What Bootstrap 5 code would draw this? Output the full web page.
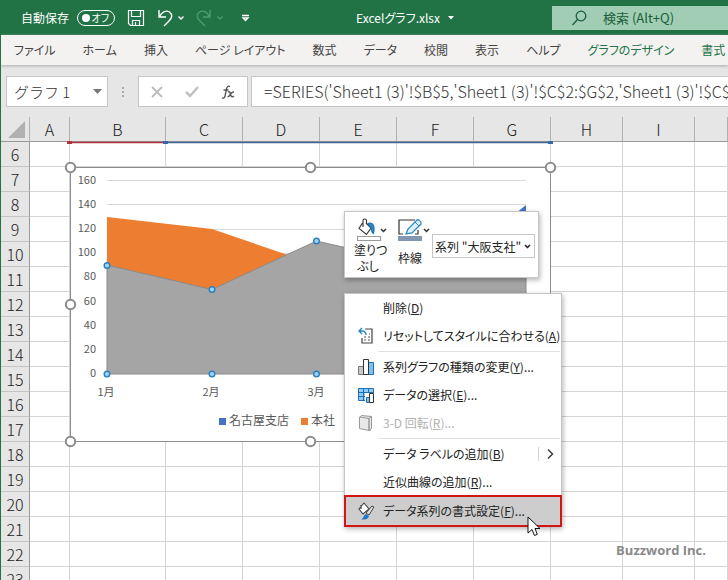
<!DOCTYPE html>
<html lang="ja">
<head>
<meta charset="utf-8">
<meta name="viewport" content="width=device-width, initial-scale=1">
<title>Excelグラフ.xlsx</title>
<link href="https://cdn.jsdelivr.net/npm/bootstrap@5.3.0/dist/css/bootstrap.min.css" rel="stylesheet">
<style>
body{font-family:"Noto Sans CJK JP","Noto Sans",sans-serif;font-size:12px;line-height:20px;font-feature-settings:"palt";color:#444;background:#e6e6e6;border-left:1px solid #217346}
button{font:inherit;font-feature-settings:inherit;color:inherit;background:none;border:0;padding:0}
.titlebar{background:#217346;color:#fff;height:35px}
.titlebar svg,.menu-icon{flex:none}
.switch{width:38px;height:16px;border:1px solid #fff;border-radius:8px;font-size:10px;line-height:14px;padding:0 5px 0 4px}
.switch .knob{width:8px;height:8px;border-radius:4px;background:#fff}
.search{background:#a0cdb3;color:#1b5e38;height:24px;width:176px;font-size:13px;gap:14px}
.search input{background:none;border:0;outline:0;color:inherit;font:inherit;min-width:0}
.search input::placeholder{color:#1b5e38;opacity:1}
.ribbon{background:#f3f2f1;height:30px;gap:27px;padding-left:13px;box-shadow:0 1px 3px #aaa}
.ribbon a{color:#444;text-decoration:none;white-space:nowrap}
.ribbon a.chart-tab{color:#217346}
.formulabar{padding:11px 0 10px 5px}
.fbox{height:31px;border:1px solid #c6c6c6;background-color:#fff;border-radius:0;color:#333}
.namebox{width:102px;font-size:15px;line-height:20px;padding:0 20px 0 7px;appearance:none;font-weight:300;font-feature-settings:normal;background-repeat:no-repeat;background-position:right 5px center;background-image:url("data:image/svg+xml,%3Csvg xmlns='http://www.w3.org/2000/svg' width='9' height='5'%3E%3Cpath d='M0 0h9L4.500 5z' fill='%23777'/%3E%3C/svg%3E")}
.dots{margin:0 14px}
.fxbox{width:110px}
.formula{min-width:0;margin-left:3px;padding:0 0 2px 12px;border-right:0;font:300 16px "Noto Sans CJK JP",sans-serif;outline:0}
.sheet{min-height:0}
.cells{table-layout:fixed;width:100%;border-collapse:separate;border-spacing:0}
.cells th{font:300 16px/22px "Noto Sans CJK JP",sans-serif;color:#222;text-align:center;padding:0;background:#e6e6e6}
.cells thead th{height:25px;border-right:1px solid #b1b1b1;border-bottom:1px solid #999}
.cells tbody th{height:25px;line-height:24px;border-right:1px solid #999;border-bottom:1px solid #c4c4c4}
.cells td{background:#fff;border-right:1px solid #d4d4d4;border-bottom:1px solid #d4d4d4;padding:0}
.w-head{width:29px}.w-a{width:40px}.w-b{width:96px}.w-c{width:77px}.w-h{width:72px}
.chart{position:absolute;left:59px;top:24px}
.chart text{font-family:"Noto Sans CJK JP",sans-serif;font-size:12px;fill:#595959}
.chart .scale text{font-size:11px}
.popup{position:absolute;background:#fff;border:1px solid #c6c6c6;box-shadow:1px 2px 5px rgba(0,0,0,.3);color:#222}
.minibar{left:343px;top:94px;width:195px;height:67px;padding:6px 3px 0 9px}
.minibar button{line-height:16px}
.minibar .caption{width:28px}
.series{width:103px;height:24px;border:1px solid #c6c6c6;font:12px "Noto Sans CJK JP",sans-serif;font-feature-settings:normal;color:#222;padding:0 12px 0 2px;appearance:none;background:#fff url("data:image/svg+xml,%3Csvg xmlns='http://www.w3.org/2000/svg' width='7' height='5'%3E%3Cpath d='M1 1l2.500 2.500L6 1' fill='none' stroke='%23222' stroke-width='1.500'/%3E%3C/svg%3E") no-repeat right 3px center}
.context{left:343px;top:176px;width:218px}
.context button{display:flex;align-items:center;height:28px;width:100%;text-align:left;padding-left:12px;gap:8px;white-space:nowrap}
.context button:disabled{color:#b1b1b1}
.context hr{margin:1px 1px 1px 33px;border:0;border-top:1px solid #e1e1e1;opacity:1}
.context .picked{background:#cdcdcd;outline:2px solid #d31515;outline-offset:-1px;height:30px}
.menu-icon{width:18px;height:18px}
.more{border-left:1px solid #d4d4d4;margin-right:7px;padding-left:7px;height:14px;display:flex;align-items:center}
.pointer{position:absolute;left:526px;top:399px}
.credit{position:absolute;right:22px;bottom:20px;font:700 13px/20px "Open Sans",sans-serif;color:#8a8a8a}
</style>
</head>
<body class="vh-100 d-flex flex-column overflow-hidden">
<header class="titlebar d-flex align-items-center flex-shrink-0">
  <div class="d-flex align-items-center flex-fill ps-3">
    <span class="ms-1 me-2 text-nowrap">自動保存</span>
    <button class="switch d-flex align-items-center justify-content-between" role="switch" aria-checked="false" aria-label="自動保存"><span class="knob"></span>オフ</button>
    <button class="ms-2 d-flex px-1" aria-label="保存"><svg width="18" height="18" fill="none" stroke="#fff" stroke-width="1.200"><path d="M1.500 1.500h15v15h-13l-2-2zM4.500 1.500v6h9v-6M5.500 16.500v-5h7v5M8.500 16v-3"/></svg></button>
    <button class="ms-2 d-flex" aria-label="元に戻す"><svg width="30" height="18" fill="none" stroke="#fff" stroke-width="1.400"><path d="M2 1v7h7M2.500 7.500C5 3 9 .8 12.500 3c3.500 2.500 2.500 6-.5 9l-5 5M21.500 7.500l2.500 2.500 2.500-2.500"/></svg></button>
    <button class="ms-2 d-flex" aria-label="やり直し" disabled><svg width="30" height="18" fill="none" stroke="#4f9b70" stroke-width="1.400"><path d="M15 1v7H8M14.500 7.500C12 3 8 .8 4.500 3 1 5.500 2 9 5 12l5 5M22.500 7.500l2.500 2.500 2.500-2.500"/></svg></button>
    <button class="ms-3 d-flex" aria-label="カスタマイズ"><svg width="9" height="8" fill="none" stroke="#fff" stroke-width="1.300"><path d="M1 1.500h7M2 4h5L4.500 6.500z"/></svg></button>
  </div>
  <button class="d-flex align-items-center gap-2 text-nowrap ms-2">Excelグラフ.xlsx <svg width="6" height="4"><path d="M0 0h6L3 3.500z" fill="#fff"/></svg></button>
  <div class="d-flex justify-content-end flex-fill">
    <label class="search d-flex align-items-center ps-3"><svg class="ms-1" width="15" height="16" fill="none" stroke="#1b5e38" stroke-width="1.300"><circle cx="9" cy="6" r="4.800"/><path d="M5.500 9.500L.5 15"/></svg><input type="search" placeholder="検索 (Alt+Q)" aria-label="検索"></label>
  </div>
</header>
<nav class="ribbon d-flex align-items-center flex-shrink-0 overflow-hidden">
  <a href="#">ファイル</a><a href="#">ホーム</a><a href="#">挿入</a><a href="#">ページ レイアウト</a><a href="#">数式</a><a href="#">データ</a><a href="#">校閲</a><a href="#">表示</a><a href="#">ヘルプ</a><a href="#" class="chart-tab">グラフのデザイン</a><a href="#" class="chart-tab">書式</a>
</nav>
<div class="formulabar d-flex align-items-center flex-shrink-0">
  <select class="fbox namebox" aria-label="名前ボックス"><option>グラフ 1</option></select>
  <svg class="dots flex-shrink-0" width="2" height="12" fill="#aaa"><path d="M0 1h2v2H0zM0 5h2v2H0zM0 9h2v2H0z"/></svg>
  <div class="fbox fxbox d-flex align-items-center justify-content-between px-2 flex-shrink-0">
    <button class="d-flex ms-1" aria-label="キャンセル"><svg width="12" height="12" stroke="#bcbcbc" stroke-width="1.800"><path d="M1 1l10 10M11 1L1 11"/></svg></button>
    <button class="d-flex" aria-label="入力"><svg width="14" height="12" fill="none" stroke="#c0c0c0" stroke-width="2.500"><path d="M1 6l4 4L13 1"/></svg></button>
    <button class="d-flex me-1" aria-label="関数の挿入"><svg width="14" height="14" fill="none" stroke="#555" stroke-width="1.400"><path d="M9 1.500C7 .5 6 1.500 5.500 4L4 11c-.5 2-1.500 2.500-3 1.800M2.500 5h5M7 7c2-.8 2 .5 2.500 2.500S11 12.500 13 11M13 7c-2-.5-3 1.500-4 3s-1.500 2-2.500 1.500"/></svg></button>
  </div>
  <input class="fbox formula flex-fill" aria-label="数式バー" value="=SERIES('Sheet1 (3)'!$B$5,'Sheet1 (3)'!$C$2:$G$2,'Sheet1 (3)'!$C$5:$G$5,3)">
</div>
<main class="sheet position-relative flex-fill overflow-hidden">
  <table class="cells">
    <colgroup><col class="w-head"><col class="w-a"><col class="w-b"><col class="w-c"><col class="w-c"><col class="w-c"><col class="w-c"><col class="w-c"><col class="w-h"><col class="w-h"><col></colgroup>
    <thead><tr><th><svg class="d-block ms-auto me-1" width="17" height="17" aria-label="すべて選択"><path d="M17 0v17H0z" fill="#b1b1b1"/></svg></th><th>A</th><th>B</th><th>C</th><th>D</th><th>E</th><th>F</th><th>G</th><th>H</th><th>I</th><th></th></tr></thead>
    <tbody id="rows"></tbody>
  </table>
  <svg class="chart" width="500" height="311" viewBox="60 141 500 311" role="img" aria-label="面グラフ">
    <path d="M72 142.500h91" stroke="#b0343c" stroke-width="1.500"/><path d="M168 142.500h380" stroke="#3f6797" stroke-width="1.500"/>
    <path d="M67 141h5v3h-5z" fill="#b0343c"/><path d="M163 141h5v3h-5zM548 141h5v3h-5z" fill="#3a66ae"/>
    <path d="M70.500 167.500h480v274h-480z" fill="#fff" stroke="#8c8c8c"/>
    <path d="M107 180.500h419M107 204.500h419M107 229.500h419M107 253.500h419" stroke="#d9d9d9"/>
    <path d="M421 290L526 205v169H421z" fill="#4472c4"/>
    <path d="M107 217l105 12 105 36v109H107z" fill="#ed7d31"/>
    <path d="M107 265l105 24.500L316.500 241l105 24L526 253v121H107z" fill="#a5a5a5" stroke="#8b8b8b"/>
    <g class="scale" text-anchor="end"><text x="96" y="184">160</text><text x="96" y="208">140</text><text x="96" y="232">120</text><text x="96" y="256">100</text><text x="96" y="280">80</text><text x="96" y="305">60</text><text x="96" y="329">40</text><text x="96" y="353">20</text><text x="96" y="377">0</text></g>
    <g class="scale" text-anchor="middle"><text x="106" y="396">1月</text><text x="211" y="396">2月</text><text x="316" y="396">3月</text></g>
    <path d="M219 418h7v7h-7z" fill="#4472c4"/><path d="M301 418h7v7h-7z" fill="#ed7d31"/>
    <text x="229" y="425">名古屋支店</text><text x="311" y="425">本社</text>
    <g fill="#9bd5fa" stroke="#2e7fc0" stroke-width="1.400"><circle cx="107" cy="265.500" r="2.800"/><circle cx="212" cy="289.500" r="2.800"/><circle cx="316.500" cy="241" r="2.800"/><circle cx="107" cy="374" r="2.800"/><circle cx="212" cy="374" r="2.800"/><circle cx="316.500" cy="374" r="2.800"/></g>
    <g fill="#fff" stroke="#8c8c8c" stroke-width="2"><circle cx="70.500" cy="167.500" r="4.700"/><circle cx="310.500" cy="167.500" r="4.700"/><circle cx="550.500" cy="167.500" r="4.700"/><circle cx="70.500" cy="304.500" r="4.700"/><circle cx="70.500" cy="441.500" r="4.700"/><circle cx="310.500" cy="441.500" r="4.700"/></g>
  </svg>
  <div class="popup minibar d-flex align-items-start" role="toolbar">
    <button><svg class="d-block" width="34" height="24" fill="none" stroke="#333" stroke-width="1.100"><path d="M9 9V2.500c0-2 3.500-2 3.500 0V5M8.500 5L5 10.500l7.500 6L17 10l-5-5"/><path d="M14 5.500c4-1.500 7.500 1 5.500 10-2.500-.5-1.500-4.500-3-6z" fill="#2b88c9" stroke="#1b6fb0"/><path d="M27 11l2.500 2.500L32 11" stroke-width="1.500"/><path d="M3.500 18.500h23v4h-23z" fill="#fff" stroke="#999"/></svg><span class="caption d-block text-center text-nowrap">塗りつ<br>ぶし</span></button>
    <button class="ms-2"><svg class="d-block mb-2" width="34" height="24" fill="none"><path d="M19 2H3v14h4M19 16h3v-4" stroke="#333" stroke-width="1.200"/><path d="M10 16l2-5 9-9c1-1 5 2 4 4l-9 9z" fill="#dff1fc" stroke="#2b88c9" stroke-width="1.300"/><path d="M19 4l4 4" stroke="#2b88c9"/><path d="M28 11l2.500 2.500L33 11" stroke="#333" stroke-width="1.500"/><path d="M2 18h24v5H2z" fill="#8497b0"/></svg><span class="caption d-block text-center">枠線</span></button>
    <select class="series ms-auto mt-3" aria-label="グラフ要素"><option>系列 "大阪支社"</option></select>
  </div>
  <div class="popup context" role="menu">
    <button role="menuitem"><span class="menu-icon"></span><span>削除(<u>D</u>)</span></button>
    <button role="menuitem"><svg class="menu-icon" fill="none"><path d="M8 2h7v14H5v-5" stroke="#444" stroke-width="1.200"/><path d="M5 1L2 4l3 3M2 4h3c3 0 4 1 4 4" stroke="#2b88c9" stroke-width="1.400"/><path d="M7 10h2M11 10h2M7 13h2M11 13h2M12 7h1" stroke="#555"/></svg><span>リセットしてスタイルに合わせる(<u>A</u>)</span></button>
    <hr>
    <button role="menuitem"><svg class="menu-icon"><path d="M1.500 8.500h5v8h-5z" fill="#c8c8c8" stroke="#777"/><path d="M11.500 4.500h5v12h-5z" fill="#7cc0f2" stroke="#1e6fb3"/><path d="M6.500 1.500h5v15h-5z" fill="#fff" stroke="#333"/></svg><span>系列グラフの種類の変更(<u>Y</u>)...</span></button>
    <button role="menuitem"><svg class="menu-icon"><path d="M1.500 2.500h15v12h-15z" fill="#8fcbf5" stroke="#1e6fb3"/><path d="M1 6.500h15M1 10.500h8M6.500 2v12M11.500 2v7" stroke="#1e6fb3"/><path d="M8 7h9v11H8z" fill="#fff"/><path d="M9.500 11.500h3v5h-3z" fill="#7cc0f2" stroke="#1e6fb3"/><path d="M12.500 7.500h4v9h-4z" fill="#fff" stroke="#333"/></svg><span>データの選択(<u>E</u>)...</span></button>
    <button role="menuitem" disabled><svg class="menu-icon" fill="#e8e8e8" stroke="#999"><path d="M2.500 3.500l2-2 10 1v11l-1.500 3z"/><path d="M2.500 3v11.500l9.500 2V4.500zM12 4.500l2.500-2v12l-2.500 2z"/></svg><span>3-D 回転(<u>R</u>)...</span></button>
    <hr>
    <button role="menuitem"><span class="menu-icon"></span><span>データ ラベルの追加(<u>B</u>)</span><span class="more ms-auto"><svg width="8" height="12" fill="none" stroke="#333" stroke-width="1.400"><path d="M2 1.500L6.500 6 2 10.500"/></svg></span></button>
    <button role="menuitem"><span class="menu-icon"></span><span>近似曲線の追加(<u>R</u>)...</span></button>
    <button role="menuitem" class="picked"><svg class="menu-icon" fill="none"><path d="M4 3v4M7 1l5 6-6 5-4-5z" fill="#fff" stroke="#444" stroke-width="1.100"/><path d="M9 11l6-7 2 1-5 8z" fill="#ddd" stroke="#444"/><path d="M4 17c3 0 2-4 5-5l3 2c-1 4-5 4-8 3z" fill="#1e78c8"/></svg><span>データ系列の書式設定(<u>F</u>)...</span></button>
  </div>
  <svg class="pointer" width="14" height="22"><path d="M1 1v16l4-3.500 2.500 6 2.800-1.200L8 12.500h5z" fill="#fff" stroke="#111"/></svg>
  <div class="credit">Buzzword Inc.</div>
</main>
<script src="https://cdn.jsdelivr.net/npm/bootstrap@5.3.0/dist/js/bootstrap.bundle.min.js"></script>
<script>
const rows = document.getElementById("rows");
for (let n = 6; n <= 23; n++) {
  rows.insertAdjacentHTML("beforeend", `<tr><th scope="row">${n}</th>${"<td></td>".repeat(10)}</tr>`);
}
</script>
</body>
</html>
